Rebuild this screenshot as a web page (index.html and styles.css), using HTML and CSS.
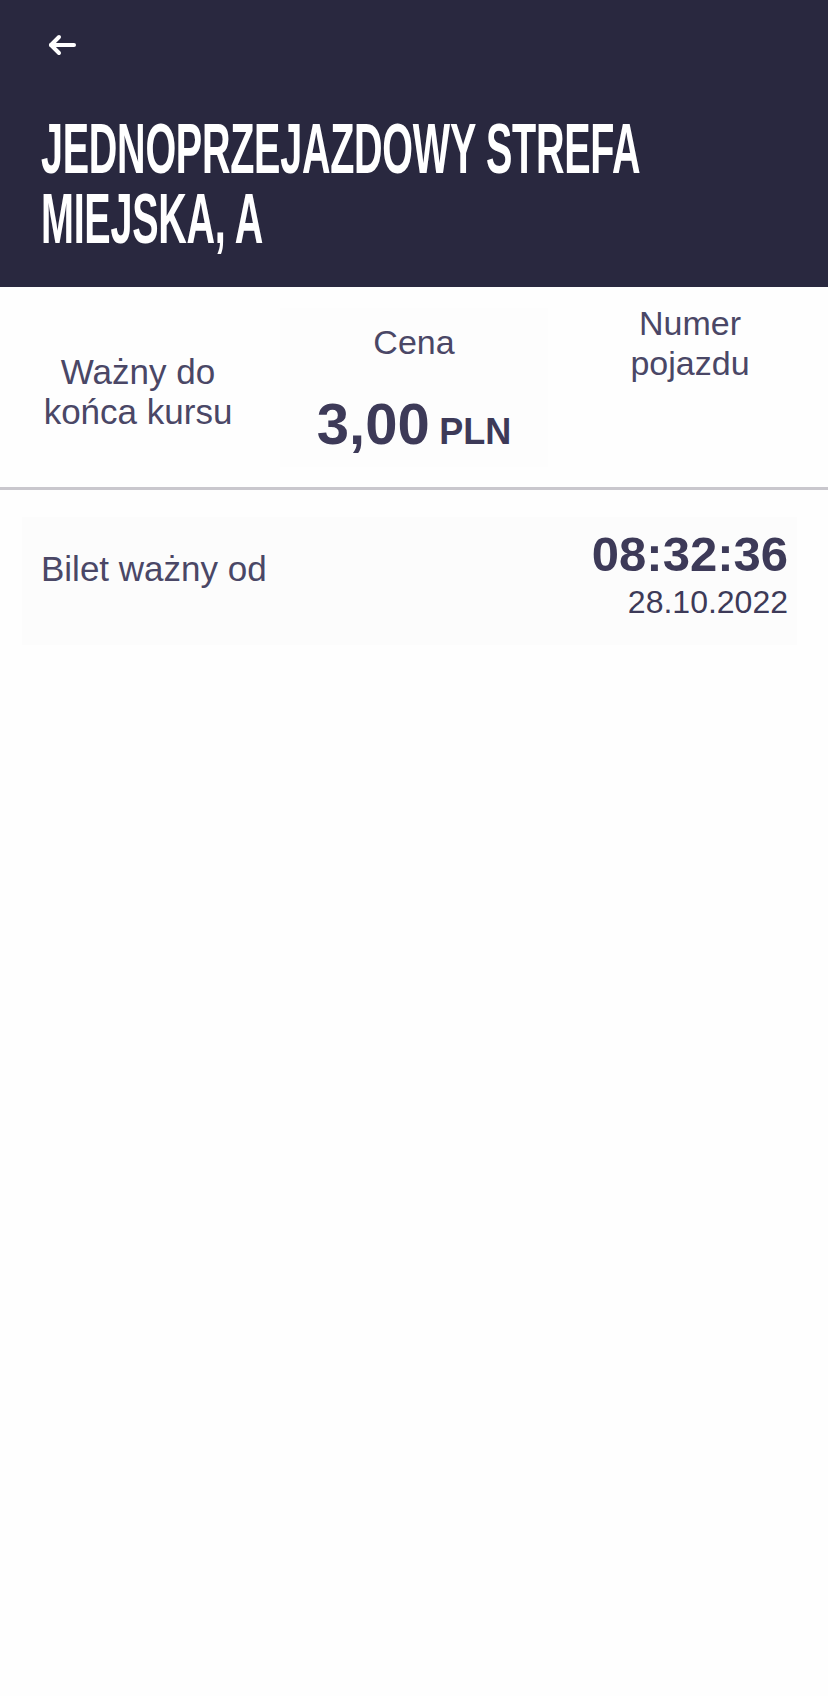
FILE: index.html
```html
<!DOCTYPE html>
<html lang="pl">
<head>
<meta charset="utf-8">
<title>Bilet</title>
<link rel="stylesheet" href="styles.css">
</head>
<body>
<header class="topbar">
  <button class="back" aria-label="Wstecz">
    <svg width="28" height="22" viewBox="0 0 28 22" fill="none" stroke="#ffffff" stroke-width="4" stroke-linecap="round" stroke-linejoin="round">
      <path d="M26 11H3"/>
      <path d="M11 3L3 11L11 19"/>
    </svg>
  </button>
  <h1 class="title"><span class="title-text">JEDNOPRZEJAZDOWY STREFA<br>MIEJSKA, A</span></h1>
</header>

<section class="info">
  <div class="info-col info-valid">Ważny do<br>końca kursu</div>
  <div class="info-col info-price">
    <div class="label">Cena</div>
    <div class="price"><span class="amount">3,00</span> <span class="currency">PLN</span></div>
  </div>
  <div class="info-col info-vehicle">Numer<br>pojazdu</div>
</section>

<section class="card">
  <div class="card-label">Bilet ważny od</div>
  <div class="card-time">
    <div class="time">08:32:36</div>
    <div class="date">28.10.2022</div>
  </div>
</section>
</body>
</html>
```
FILE: styles.css
```css
html, body {
  margin: 0;
  padding: 0;
}
body {
  background: #fefefe;
  font-family: "Liberation Sans", Arial, sans-serif;
  color: #4a4766;
  overflow-x: hidden;
}
.topbar {
  background: #29283f;
  padding: 34px 0 32px 41px;
  height: 287px;
  box-sizing: border-box;
  overflow: hidden;
}
.back {
  display: block;
  background: none;
  border: 0;
  padding: 0;
  margin: 0 0 0 7px;
  width: 28px;
  height: 22px;
  cursor: pointer;
}
.back svg {
  display: block;
}
.title {
  margin: 58px 0 0 0;
  width: 620px;
  font-size: 71px;
  line-height: 70px;
  font-weight: 700;
  color: #ffffff;
  white-space: nowrap;
}
.title-text {
  display: inline-block;
  transform: scaleX(0.557);
  transform-origin: left top;
  letter-spacing: -0.5px;
}

.info {
  display: grid;
  grid-template-columns: 1fr 1fr 1fr;
  padding: 16px 0 6px;
  height: 203px;
  box-sizing: border-box;
  border-bottom: 3px solid #c9c7cd;
  font-size: 34px;
  line-height: 40px;
  text-align: center;
}
.info-valid {
  align-self: center;
  font-size: 35px;
}
.info-vehicle {
  align-self: start;
}
.info-price {
  align-self: start;
  margin: 5px 4px 0;
  height: 159px;
  box-sizing: border-box;
  padding-top: 14px;
  background: #fdfdfd;
}
.price {
  margin-top: 33px;
  line-height: 1;
  color: #3d3a58;
  font-weight: 700;
}
.amount {
  font-size: 58px;
}
.currency {
  font-size: 36px;
}

.card {
  display: flex;
  justify-content: space-between;
  align-items: flex-start;
  margin: 27px 31px 0 22px;
  height: 128px;
  box-sizing: border-box;
  padding: 13px 9px 0 19px;
  background: #fcfcfc;
}
.card-label {
  font-size: 35px;
  line-height: 40px;
  margin-top: 19px;
}
.card-time {
  text-align: right;
  color: #3d3a58;
}
.time {
  font-size: 49px;
  line-height: 1;
  font-weight: 700;
}
.date {
  font-size: 32px;
  line-height: 1;
  margin-top: 7px;
}
```
